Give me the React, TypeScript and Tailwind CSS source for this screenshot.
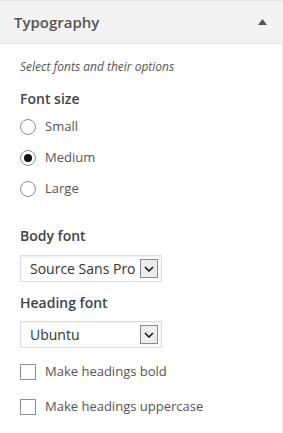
import React from 'react';

const font = { fontFamily: '"Open Sans", "Noto Sans", sans-serif' };

const Radio: React.FC<{ label: string; checked?: boolean }> = ({ label, checked }) => (
  <label className="flex items-center h-[31px]">
    <span className="w-4 h-4 rounded-full border border-[#8c8f94] bg-white flex items-center justify-center">
      {checked && <span className="w-2 h-2 rounded-full bg-[#111]" />}
    </span>
    <span className="ml-[9px] text-[13px] text-[#555]">{label}</span>
  </label>
);

const Checkbox: React.FC<{ label: string }> = ({ label }) => (
  <label className="flex items-center h-[35px]">
    <span className="w-4 h-4 border border-[#8c8f94] bg-white" />
    <span className="ml-[9px] text-[13px] text-[#555]">{label}</span>
  </label>
);

const Select: React.FC<{ value: string }> = ({ value }) => (
  <div className="w-[142px] h-[27px] border border-[#ddd] bg-white flex items-center justify-between pl-[9px] pr-[3px] shadow-[inset_0_1px_2px_rgba(0,0,0,0.07)]">
    <span className="text-[14px] text-[#333]">{value}</span>
    <span className="w-[18px] h-[19px] border border-[#8a8a8a] bg-[#ededed] flex items-center justify-center">
      <svg width="10" height="6" viewBox="0 0 10 6">
        <path d="M1 1 L5 5 L9 1" fill="none" stroke="#111" strokeWidth="1.5" />
      </svg>
    </span>
  </div>
);

export default function App() {
  return (
    <div className="w-[283px] h-[433px] bg-white" style={font}>
      <div className="h-[44px] bg-[#f3f3f3] border-t border-b border-[#e5e5e5] flex items-center justify-between pl-[14px] pr-[16px]">
        <span className="text-[15px] font-semibold text-[#555]">Typography</span>
        <svg width="9" height="6" viewBox="0 0 9 6">
          <path d="M4.5 0 L9 6 L0 6 Z" fill="#555" />
        </svg>
      </div>
      <div className="border-r border-[#e5e5e5] h-[389px] pl-5 pt-[14px]">
        <p className="text-[12px] italic text-[#555] leading-[18px]">Select fonts and their options</p>
        <h3 className="mt-[13px] text-[14px] font-semibold text-[#444] leading-[20px]">Font size</h3>
        <div className="mt-[2px]">
          <Radio label="Small" />
          <Radio label="Medium" checked />
          <Radio label="Large" />
        </div>
        <h3 className="mt-[22px] text-[14px] font-semibold text-[#444] leading-[20px]">Body font</h3>
        <div className="mt-[9px]">
          <Select value="Source Sans Pro" />
        </div>
        <h3 className="mt-[11px] text-[14px] font-semibold text-[#444] leading-[20px]">Heading font</h3>
        <div className="mt-[8px]">
          <Select value="Ubuntu" />
        </div>
        <div className="mt-[6px]">
          <Checkbox label="Make headings bold" />
          <Checkbox label="Make headings uppercase" />
        </div>
      </div>
    </div>
  );
}
